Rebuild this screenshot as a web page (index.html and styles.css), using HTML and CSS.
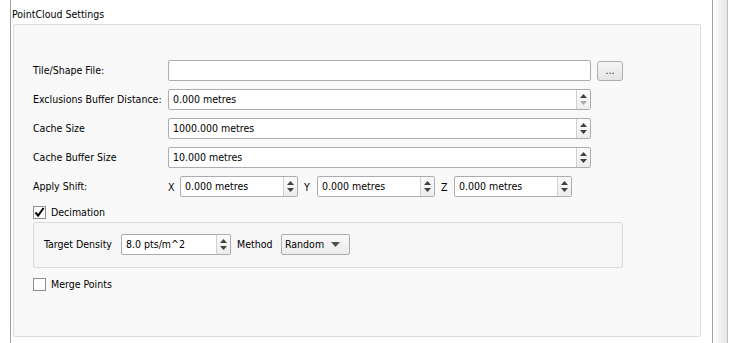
FILE: index.html
```html
<!DOCTYPE html>
<html>
<head>
<meta charset="utf-8">
<link rel="stylesheet" href="styles.css">
</head>
<body>
<div class="page">
  <div class="frame">
    <div class="title">PointCloud Settings</div>
    <div class="group">
      <div class="form">
        <div class="lbl">Tile/Shape File:</div>
        <div class="field">
          <div class="input w-long"></div>
          <div class="browse">...</div>
        </div>

        <div class="lbl">Exclusions Buffer Distance:</div>
        <div class="field">
          <div class="input w-long">
            <span class="val">0.000 metres</span>
            <span class="spin">
              <svg width="13" height="19" viewBox="0 0 13 19"><path d="M3 8h7L6.5 4z" fill="#404040"/><path d="M3 11h7l-3.5 4z" fill="#a8a8a8"/></svg>
            </span>
          </div>
        </div>

        <div class="lbl">Cache Size</div>
        <div class="field">
          <div class="input w-long">
            <span class="val">1000.000 metres</span>
            <span class="spin">
              <svg width="13" height="19" viewBox="0 0 13 19"><path d="M3 8h7L6.5 4z" fill="#404040"/><path d="M3 11h7l-3.5 4z" fill="#404040"/></svg>
            </span>
          </div>
        </div>

        <div class="lbl">Cache Buffer Size</div>
        <div class="field">
          <div class="input w-long">
            <span class="val">10.000 metres</span>
            <span class="spin">
              <svg width="13" height="19" viewBox="0 0 13 19"><path d="M3 8h7L6.5 4z" fill="#404040"/><path d="M3 11h7l-3.5 4z" fill="#404040"/></svg>
            </span>
          </div>
        </div>

        <div class="lbl">Apply Shift:</div>
        <div class="field shift">
          <span class="axis ax-x">X</span>
          <div class="input w-shift">
            <span class="val">0.000 metres</span>
            <span class="spin">
              <svg width="13" height="19" viewBox="0 0 13 19"><path d="M3 8h7L6.5 4z" fill="#404040"/><path d="M3 11h7l-3.5 4z" fill="#404040"/></svg>
            </span>
          </div>
          <span class="axis">Y</span>
          <div class="input w-shift">
            <span class="val">0.000 metres</span>
            <span class="spin">
              <svg width="13" height="19" viewBox="0 0 13 19"><path d="M3 8h7L6.5 4z" fill="#404040"/><path d="M3 11h7l-3.5 4z" fill="#404040"/></svg>
            </span>
          </div>
          <span class="axis">Z</span>
          <div class="input w-shift">
            <span class="val">0.000 metres</span>
            <span class="spin">
              <svg width="13" height="19" viewBox="0 0 13 19"><path d="M3 8h7L6.5 4z" fill="#404040"/><path d="M3 11h7l-3.5 4z" fill="#404040"/></svg>
            </span>
          </div>
        </div>
      </div>

      <div class="check-row decim">
        <span class="box">
          <svg width="11" height="11" viewBox="0 0 11 11"><path d="M1.5 5.5l2.6 3.2L9.6 1" fill="none" stroke="#000" stroke-width="2"/></svg>
        </span>
        <span>Decimation</span>
      </div>

      <div class="subgroup">
        <span class="sublbl">Target Density</span>
        <div class="input w-density">
          <span class="val">8.0 pts/m^2</span>
          <span class="spin">
            <svg width="13" height="19" viewBox="0 0 13 19"><path d="M3 8h7L6.5 4z" fill="#404040"/><path d="M3 11h7l-3.5 4z" fill="#404040"/></svg>
          </span>
        </div>
        <span class="sublbl method">Method</span>
        <div class="combo">
          <span class="val">Random</span>
          <svg class="caret" width="9" height="5" viewBox="0 0 9 5"><path d="M0 0h9L4.5 5z" fill="#505050"/></svg>
        </div>
      </div>

      <div class="check-row merge">
        <span class="box"></span>
        <span>Merge Points</span>
      </div>
    </div>
  </div>
  <div class="scrollbar"></div>
</div>
</body>
</html>
```

FILE: styles.css
```css
* { box-sizing: border-box; }

html, body {
  margin: 0;
  padding: 0;
  background: #ffffff;
}

body {
  font-family: "DejaVu Sans Condensed", "DejaVu Sans", sans-serif;
  font-stretch: condensed;
  font-size: 10.5px;
  color: #000;
  width: 734px;
  height: 343px;
  overflow: hidden;
}

.page {
  display: flex;
  height: 343px;
}

.frame {
  flex: none;
  margin-left: 10px;
  width: 702px;
  height: 343px;
  border-left: 1px solid #a0a0a0;
}

.title {
  height: 24px;
  padding: 8px 0 0 1px;
  line-height: 12px;
}

.group {
  margin-left: 2px;
  width: 688px;
  height: 313px;
  border: 1px solid #dcdcdc;
  border-radius: 2px;
  background: #f9f9f9;
  padding: 35px 0 0 19px;
}

.form {
  display: grid;
  grid-template-columns: 135px auto;
  row-gap: 8px;
  align-items: center;
}

.lbl {
  line-height: 21px;
  white-space: nowrap;
}

.field {
  display: flex;
  align-items: center;
  height: 21px;
}

.field > *, .subgroup > *, .check-row > * { flex: none; }

.input {
  height: 21px;
  border: 1px solid #abadb3;
  border-radius: 2px;
  background: #fff;
  display: flex;
  align-items: stretch;
}

.val {
  flex: 1;
  padding-left: 4px;
  line-height: 19px;
  white-space: nowrap;
}

.spin {
  flex: none;
  width: 14px;
  border-left: 1px solid #d0d0d0;
  display: flex;
  align-items: center;
  justify-content: center;
  background: linear-gradient(#fbfbfb, #ededed);
  border-radius: 0 2px 2px 0;
}

.spin svg { display: block; }

.w-long { width: 423px; }
.w-shift { width: 118px; }
.w-density { width: 110px; }

.browse {
  margin-left: 6px;
  width: 26px;
  height: 20px;
  border: 1px solid #adadad;
  border-radius: 3px;
  background: linear-gradient(#f6f6f6, #e4e4e4);
  text-align: center;
  line-height: 17px;
  color: #1a2a5a;
}

.shift { gap: 6px; }

.axis {
  width: 7px;
  text-align: left;
}

.ax-x { width: 6px; }

.check-row {
  display: flex;
  align-items: center;
  gap: 5px;
  height: 13px;
  line-height: 13px;
}

.decim { margin-top: 9px; }
.merge { margin-top: 10px; }

.box {
  width: 13px;
  height: 13px;
  border: 1px solid #8e8f8f;
  background: #fff;
  display: flex;
  align-items: center;
  justify-content: center;
}

.box svg { display: block; }

.subgroup {
  margin-top: 3px;
  width: 590px;
  height: 46px;
  border: 1px solid #dcdcdc;
  border-radius: 2px;
  background: #f6f6f6;
  padding: 11px 0 0 10px;
  display: flex;
  align-items: flex-start;
}

.sublbl {
  line-height: 21px;
  width: 70px;
  margin-right: 7px;
  white-space: nowrap;
}

.method {
  width: 36px;
  margin-left: 6px;
  margin-right: 8px;
}

.combo {
  width: 69px;
  height: 21px;
  border: 1px solid #abadb3;
  border-radius: 2px;
  background: linear-gradient(#f8f8f8, #ececec);
  display: flex;
  align-items: center;
  padding-right: 9px;
}

.combo .val { padding-left: 3px; }

.scrollbar {
  flex: none;
  width: 16px;
  height: 343px;
  border-left: 1px solid #a0a0a0;
  border-right: 1px solid #c0c0c0;
  background: linear-gradient(to right, #ffffff, #e6e6e6);
}
```
